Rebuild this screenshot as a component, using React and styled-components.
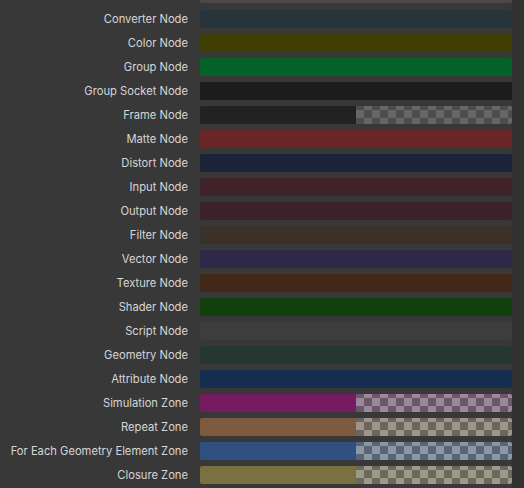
import React from "react";
import styled, { createGlobalStyle, css } from "styled-components";

const GlobalStyle = createGlobalStyle`
  html, body {
    margin: 0;
    padding: 0;
    background: #383838;
  }
  body {
    font-family: Inter, "Noto Sans", "DejaVu Sans", sans-serif;
  }
`;

const Viewport = styled.div`
  width: 524px;
  height: 488px;
  overflow: hidden;
  display: grid;
  grid-template-columns: 1fr 12px;
  background: #383838;
`;

const ScrollTrack = styled.div`
  background: #323232;
`;

const List = styled.div`
  display: flex;
  flex-direction: column;
  gap: 6px;
  margin-top: -15px;
`;

const Row = styled.div`
  display: grid;
  grid-template-columns: 188px 312px;
  column-gap: 12px;
  height: 18px;
  align-items: center;
`;

const Label = styled.span`
  text-align: right;
  font-size: 11.2px;
  color: #d6d6d6;
  white-space: nowrap;
  line-height: 18px;
  padding-top: 1px;
`;

const Swatch = styled.div`
  height: 18px;
  border-radius: 2px;
  overflow: hidden;
  display: ${(p) => (p.$split ? "grid" : "block")};
  grid-template-columns: 1fr 1fr;
  background: ${(p) => p.$color};
  ${(p) =>
    p.$split &&
    css`
      background: transparent;
    `}
`;

const Solid = styled.div`
  background: ${(p) => p.$color};
`;

const Checker = styled.div`
  background-color: ${(p) => p.$light};
  background-image:
    linear-gradient(45deg, ${(p) => p.$dark} 25%, transparent 25%, transparent 75%, ${(p) => p.$dark} 75%),
    linear-gradient(45deg, ${(p) => p.$dark} 25%, transparent 25%, transparent 75%, ${(p) => p.$dark} 75%);
  background-size: 16px 16px;
  background-position: 0 4px, 8px 12px;
`;

const rows = [
  { label: "", color: "#4a4a4a" },
  { label: "Converter Node", color: "#27343b" },
  { label: "Color Node", color: "#403e02" },
  { label: "Group Node", color: "#05632a" },
  { label: "Group Socket Node", color: "#1d1d1d" },
  { label: "Frame Node", color: "#222222", light: "#666666", dark: "#4d4d4d" },
  { label: "Matte Node", color: "#6c2527" },
  { label: "Distort Node", color: "#1c2439" },
  { label: "Input Node", color: "#3f2329" },
  { label: "Output Node", color: "#3d2229" },
  { label: "Filter Node", color: "#3b3128" },
  { label: "Vector Node", color: "#302848" },
  { label: "Texture Node", color: "#412818" },
  { label: "Shader Node", color: "#11400d" },
  { label: "Script Node", color: "#3d3d3d" },
  { label: "Geometry Node", color: "#263630" },
  { label: "Attribute Node", color: "#132e4f" },
  { label: "Simulation Zone", color: "#751b60", light: "#9b8799", dark: "#6a5669" },
  { label: "Repeat Zone", color: "#7e5b3e", light: "#9e968c", dark: "#6c655e" },
  { label: "For Each Geometry Element Zone", color: "#2f5080", light: "#8c97a6", dark: "#5a6474" },
  { label: "Closure Zone", color: "#7a7040", light: "#9c9a8b", dark: "#6a695c" },
];

function ColorSwatch({ color, light, dark }) {
  if (!light) {
    return <Swatch $color={color} />;
  }
  return (
    <Swatch $split>
      <Solid $color={color} />
      <Checker $light={light} $dark={dark} />
    </Swatch>
  );
}

export default function App() {
  return (
    <>
      <GlobalStyle />
      <Viewport>
        <List>
          {rows.map((r, i) => (
            <Row key={i}>
              <Label>{r.label}</Label>
              <ColorSwatch color={r.color} light={r.light} dark={r.dark} />
            </Row>
          ))}
        </List>
        <ScrollTrack />
      </Viewport>
    </>
  );
}
